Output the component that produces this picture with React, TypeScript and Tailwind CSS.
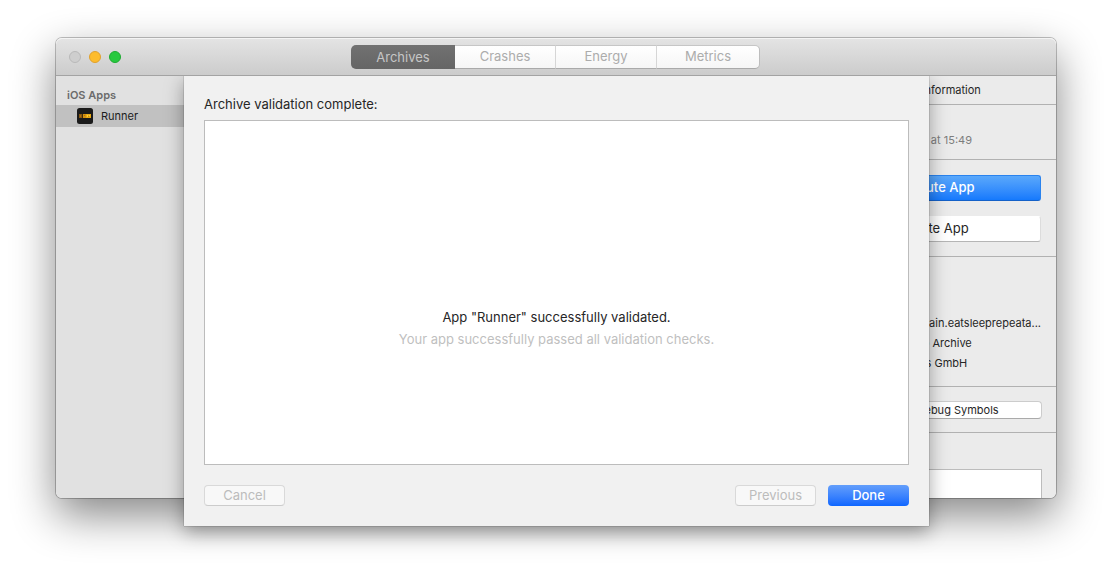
import React from "react";

const tabs = ["Crashes", "Energy", "Metrics"];

function TitleBar() {
  return (
    <header className="relative grid h-[38px] grid-cols-[1fr_auto_1fr] items-center rounded-t-md border-b border-[#a3a3a3] bg-linear-to-b from-[#e4e4e4] to-[#cccccc] pr-[14px] pl-[13px] shadow-[inset_0_1px_0_#f4f4f4]">
      <div className="flex gap-2">
        <button type="button" aria-label="Close" className="size-3 rounded-full border border-[#b9b9b9] bg-[#cecece]" />
        <button type="button" aria-label="Minimize" className="size-3 rounded-full border border-[#e0a12e] bg-[#fdbc2d]" />
        <button type="button" aria-label="Zoom" className="size-3 rounded-full border border-[#1eab31] bg-[#28c93f]" />
      </div>
      <nav className="flex h-6 text-[13px]">
        <button
          type="button"
          aria-pressed="true"
          className="w-[104px] rounded-l-[5px] bg-linear-to-b from-[#717171] to-[#656565] pt-0.5 text-[#c6c6c6]"
        >
          Archives
        </button>
        {tabs.map((tab) => (
          <button
            key={tab}
            type="button"
            aria-pressed="false"
            className="w-[101px] border-y border-r border-t-[#c6c6c6] border-r-[#d6d6d6] border-b-[#aaaaaa] bg-linear-to-b from-white to-[#f6f6f6] pt-px text-[#acacac] last:w-[103px] last:rounded-r-[5px] last:border-r-[#bdbdbd]"
          >
            {tab}
          </button>
        ))}
      </nav>
      <div />
    </header>
  );
}

function Sidebar() {
  return (
    <aside className="w-32 rounded-bl-md bg-[#e1e1e1] pt-3">
      <h2 className="px-[11px] pb-0.5 text-[11px] leading-[15px] font-semibold text-[#6b6b6b]">iOS Apps</h2>
      <a href="#runner" className="flex h-[22px] items-center gap-2 bg-[#c1c1c1] pl-[21px] text-[11px] text-[#1c1c1c]">
        <svg viewBox="0 0 16 16" className="size-4" aria-hidden="true">
          <rect width="16" height="16" rx="2.5" fill="#1b1b1b" />
          <path d="M2 6h3v4H2z" fill="#87580f" />
          <path d="M3 7h1v2H3z" fill="#b06d12" />
          <path d="M5 6h1v4H5z" fill="#3d2c10" />
          <path d="M6 6h3v4H6z" fill="#d59210" />
          <path d="M7 7h1v1H7z" fill="#a8740f" />
          <path d="M9 6h5v4H9z" fill="#e9a914" />
          <path d="M10 7h1v2h-1zM12 7h1v1h-1z" fill="#f8d13a" />
          <path d="M11 8h1v1h-1z" fill="#c08a13" />
        </svg>
        Runner
      </a>
    </aside>
  );
}

function Inspector() {
  return (
    <aside className="w-[252px] overflow-hidden rounded-br-md bg-[#ebebeb] text-[11px] text-[#262626]">
      <h2 className="border-b border-[#b1b1b1] text-center leading-7">Archive Information</h2>
      <div className="border-b border-[#b1b1b1] pt-[27px] pr-[84px] pb-[11px] text-right leading-4 text-[#7d7d7d]">at 15:49</div>
      <div className="flex flex-col gap-[15px] border-b border-[#b1b1b1] px-[15px] pt-[15px] pb-[14px] text-[13px]">
        <button type="button" className="h-[26px] rounded-[3px] border border-[#2a83ee] border-b-[#1461c8] bg-linear-to-b from-[#5aa8fb] to-[#1479fd] font-medium text-white">
          Distribute App
        </button>
        <button type="button" className="h-[26px] rounded-[3px] border border-x-[#dcdcdc] border-t-white border-b-[#b5b5b5] bg-white">
          Validate App
        </button>
      </div>
      <ul className="border-b border-[#b1b1b1] pt-14 pr-[15px] pb-[13px] pl-[83px] leading-5">
        <li className="text-right whitespace-nowrap">domain.eatsleeprepeata...</li>
        <li>iOS App Archive</li>
        <li>Systems GmbH</li>
      </ul>
      <div className="border-b border-[#b1b1b1] px-[14px] pt-[14px] pb-[13px]">
        <button type="button" className="h-[18px] w-full rounded border border-[#cccccc] border-b-[#aaaaaa] bg-white">
          Download Debug Symbols
        </button>
      </div>
      <div className="px-[14px] pt-9">
        <textarea aria-label="Description" className="block h-[29px] w-full resize-none border border-b-0 border-[#bcbcbc] bg-white" />
      </div>
    </aside>
  );
}

function ValidationSheet() {
  const disabled = "h-[21px] w-[81px] rounded border border-[#d9d9d9] border-b-[#cccccc] bg-[#f8f8f8] text-[#bcbcbc]";
  return (
    <section
      role="dialog"
      aria-labelledby="sheet-title"
      className="absolute top-[38px] right-[127px] left-32 bg-[#f1f1f1] px-5 pt-[19px] pb-5 text-[13px] text-[#262626] shadow-[0_0_1px_rgba(0,0,0,0.6),0_6px_18px_rgba(0,0,0,0.36)] [clip-path:inset(0_-40px_-50px_-40px)]"
    >
      <h1 id="sheet-title" className="leading-[19px]">Archive validation complete:</h1>
      <div className="mt-[6px] flex h-[345px] flex-col items-center border border-[#bcbcbc] bg-white pt-[185px] text-center leading-[22px]">
        <p>App "Runner" successfully validated.</p>
        <p className="text-[#bfbfbf]">Your app successfully passed all validation checks.</p>
      </div>
      <div className="mt-5 flex gap-3 leading-[19px]">
        <button type="button" disabled className={disabled}>Cancel</button>
        <div className="flex-1" />
        <button type="button" disabled className={disabled}>Previous</button>
        <button type="button" className="h-[21px] w-[81px] rounded bg-linear-to-b from-[#639efb] to-[#0c66ff] font-medium text-white">
          Done
        </button>
      </div>
    </section>
  );
}

export default function App() {
  return (
    <main className="min-h-screen bg-white px-14 pt-[38px] pb-[74px] font-['Inter','Liberation_Sans',sans-serif]">
      <div className="relative rounded-md shadow-[0_0_0_1px_rgba(0,0,0,0.24),0_17px_44px_rgba(0,0,0,0.48)]">
        <TitleBar />
        <div className="flex">
          <Sidebar />
          <div className="flex-1 bg-[#ebebeb]" />
          <Inspector />
        </div>
        <ValidationSheet />
      </div>
    </main>
  );
}
